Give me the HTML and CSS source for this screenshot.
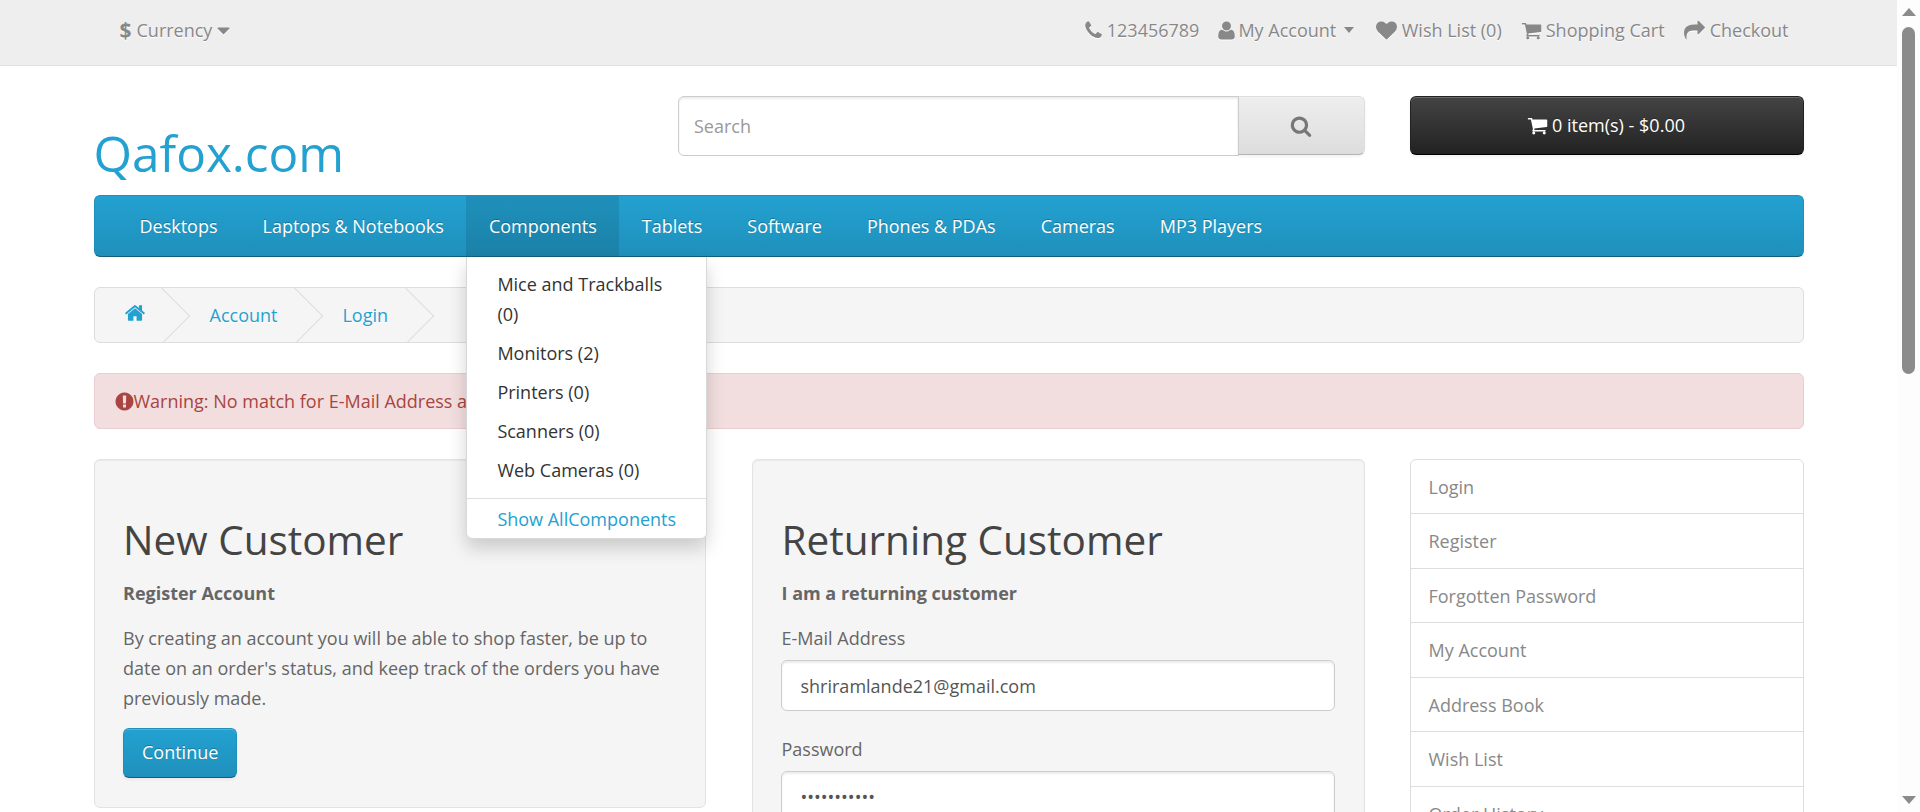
FILE: index.html
```html
<!DOCTYPE html>
<html lang="en">
<head>
<meta charset="utf-8">
<title>Account Login</title>
<link rel="stylesheet" href="styles.css">
</head>
<body>
<svg class="sprite" aria-hidden="true">
  <symbol id="i-home" viewBox="0 0 1792 1792"><path d="M1472 992v480q0 26-19 45t-45 19h-384v-384h-256v384h-384q-26 0-45-19t-19-45v-480q0-1 .5-3t.5-3l575-474 575 474q1 2 1 6zm223-69l-62 74q-8 9-21 11h-3q-13 0-21-7l-692-577-692 577q-12 8-24 7-13-2-21-11l-62-74q-8-10-7-23.500t11-21.500l719-599q32-26 76-26t76 26l244 204v-195q0-14 9-23t23-9h192q14 0 23 9t9 23v408l219 182q10 8 11 21.500t-7 23.500z"/></symbol>
  <symbol id="i-search" viewBox="0 0 1792 1792"><path d="M1216 832q0-185-131.500-316.500t-316.500-131.500-316.500 131.500-131.500 316.500 131.500 316.500 316.500 131.500 316.500-131.500 131.500-316.500zm512 832q0 52-38 90t-90 38q-54 0-90-38l-343-342q-179 124-399 124-143 0-273.500-55.500t-225-150-150-225-55.500-273.500 55.500-273.500 150-225 225-150 273.500-55.500 273.500 55.500 225 150 150 225 55.500 273.500q0 220-124 399l343 343q37 37 37 90z"/></symbol>
  <symbol id="i-cart" viewBox="0 0 1792 1792"><path d="M704 1536q0 52-38 90t-90 38-90-38-38-90 38-90 90-38 90 38 38 90zm896 0q0 52-38 90t-90 38-90-38-38-90 38-90 90-38 90 38 38 90zm128-1088v512q0 24-16.500 42.500t-40.500 21.500l-1044 122q13 60 13 70 0 16-24 64h920q26 0 45 19t19 45-19 45-45 19h-1024q-26 0-45-19t-19-45q0-11 8-31.500t16-36 21.500-40 15.500-29.500l-177-823h-204q-26 0-45-19t-19-45 19-45 45-19h256q16 0 28.500 6.500t19.500 15.500 13 24.500 8 26 5.500 29.500 4.500 26h1201q26 0 45 19t19 45z"/></symbol>
  <symbol id="i-heart" viewBox="0 0 1792 1792"><path d="M896 1664q-26 0-44-18l-624-602q-10-8-27.500-26t-55.500-65.500-68-97.500-53.500-121-23.500-138q0-220 127-344t351-124q62 0 126.500 21.500t120 58 95.500 68.500 76 68q36-36 76-68t95.500-68.500 120-58 126.500-21.500q224 0 351 124t127 344q0 221-229 450l-623 600q-18 18-44 18z"/></symbol>
  <symbol id="i-user" viewBox="0 0 1792 1792"><path d="M1600 1405q0 120-73 189.500t-194 69.500h-874q-121 0-194-69.500t-73-189.500q0-53 3.500-103.500t14-109 26.500-108.500 43-97.500 62-81 85.500-53.500 111.500-20q9 0 42 21.500t74.500 48 108 48 133.500 21.500 133.500-21.500 108-48 74.500-48 42-21.500q61 0 111.500 20t85.500 53.500 62 81 43 97.500 26.500 108.500 14 109 3.500 103.500zm-320-893q0 159-112.500 271.500t-271.500 112.500-271.500-112.500-112.500-271.500 112.500-271.500 271.500-112.500 271.500 112.500 112.500 271.500z"/></symbol>
  <symbol id="i-phone" viewBox="0 0 1792 1792"><path d="M1600 1240q0 27-10 70.500t-21 68.500q-21 50-122 106-94 51-186 51-27 0-53-3.500t-57.500-12.500-47-14.500-55.500-20.500-49-18q-98-35-175-83-127-79-264-216t-216-264q-48-77-83-175-3-9-18-49t-20.500-55.500-14.500-47-12.500-57.500-3.500-53q0-92 51-186 56-101 106-122 25-11 68.500-21t70.500-10q14 0 21 3 18 6 53 76 11 19 30 54t35 63.500 31 53.500q3 4 17.500 25t21.500 35.500 7 28.500q0 20-28.500 50t-62 55-62 53-28.500 46q0 9 5 22.500t8.500 20.500 14 24 11.500 19q76 137 174 235t235 174q2 1 19 11.500t24 14 20.500 8.500 22.500 5q18 0 46-28.500t53-62 55-62 50-28.500q14 0 28.500 7t35.500 21.500 25 17.500q25 15 53.500 31t63.500 35 54 30q70 35 76 53 3 7 3 21z"/></symbol>
  <symbol id="i-share" viewBox="0 0 1792 1792"><path d="M1792 640q0 26-19 45l-512 512q-19 19-45 19t-45-19-19-45v-256h-224q-98 0-175.500 6t-154 21.500-133 42.500-105.500 69.500-80 101-48.500 138.500-17.500 181q0 55 5 123 0 6 2.500 23.500t2.500 26.500q0 15-8.500 25t-23.500 10q-16 0-28-17-7-9-13-22t-13.500-30-10.500-24q-127-285-127-451 0-199 53-333 162-403 875-403h224v-256q0-26 19-45t45-19 45 19l512 512q19 19 19 45z"/></symbol>
  <symbol id="i-alert" viewBox="0 0 1792 1792"><path d="M896 128q209 0 385.500 103t279.500 279.500 103 385.500-103 385.500-279.500 279.500-385.500 103-385.500-103-279.500-279.500-103-385.500 103-385.500 279.500-279.500 385.500-103zm128 1247v-190q0-14-9-23.500t-22-9.500h-192q-13 0-23 10t-10 23v190q0 13 10 23t23 10h192q13 0 22-9.500t9-23.500zm-2-344l18-621q0-12-10-18-10-8-24-8h-220q-14 0-24 8-10 6-10 18l17 621q0 10 10 17.500t24 7.500h185q14 0 23.500-7.500t10.500-17.500z"/></symbol>
  <symbol id="i-caret" viewBox="0 0 1792 1792"><path d="M1408 704q0 26-19 45l-448 448q-19 19-45 19t-45-19l-448-448q-19-19-19-45t19-45 45-19h896q26 0 45 19t19 45z"/></symbol>
</svg>

<div class="viewport">
  <div class="page">
    <nav class="top">
      <div class="wrap top-inner">
        <div class="currency">
          <span class="dollar">$</span>
          <span>Currency</span>
          <svg class="icon icon-caret"><use href="#i-caret"/></svg>
        </div>
        <ul class="top-links">
          <li class="tl-phone"><svg class="icon"><use href="#i-phone"/></svg>123456789</li>
          <li class="tl-user"><svg class="icon"><use href="#i-user"/></svg>My Account<span class="mini-caret"></span></li>
          <li class="tl-heart"><svg class="icon"><use href="#i-heart"/></svg>Wish List (0)</li>
          <li class="tl-cart"><svg class="icon"><use href="#i-cart"/></svg>Shopping Cart</li>
          <li class="tl-share"><svg class="icon"><use href="#i-share"/></svg>Checkout</li>
        </ul>
      </div>
    </nav>

    <div class="wrap">
      <header class="head">
        <div class="logo"><a href="#">Qafox.com</a></div>
        <div class="search">
          <input class="search-input" type="text" placeholder="Search">
          <button class="search-btn" type="button"><svg class="icon-search"><use href="#i-search"/></svg></button>
        </div>
        <button class="cart" type="button"><svg class="icon-cart"><use href="#i-cart"/></svg>0 item(s) - $0.00</button>
      </header>

      <nav class="menu">
        <ul class="menu-list">
          <li><a href="#">Desktops</a></li>
          <li><a href="#">Laptops &amp; Notebooks</a></li>
          <li class="open">
            <a href="#">Components</a>
            <div class="dropdown">
              <ul class="dropdown-list">
                <li><a href="#">Mice and Trackballs (0)</a></li>
                <li><a href="#">Monitors (2)</a></li>
                <li><a href="#">Printers (0)</a></li>
                <li><a href="#">Scanners (0)</a></li>
                <li><a href="#">Web Cameras (0)</a></li>
              </ul>
              <a class="see-all" href="#">Show AllComponents</a>
            </div>
          </li>
          <li><a href="#">Tablets</a></li>
          <li><a href="#">Software</a></li>
          <li><a href="#">Phones &amp; PDAs</a></li>
          <li><a href="#">Cameras</a></li>
          <li><a href="#">MP3 Players</a></li>
        </ul>
      </nav>

      <ul class="breadcrumb">
        <li><a href="#"><svg class="icon-home"><use href="#i-home"/></svg></a></li>
        <li><a href="#">Account</a></li>
        <li><a href="#">Login</a></li>
      </ul>

      <div class="alert"><svg class="icon-alert"><use href="#i-alert"/></svg>Warning: No match for E-Mail Address and/or Password.</div>

      <div class="columns">
        <main class="content">
          <section class="well">
            <h2>New Customer</h2>
            <p><strong>Register Account</strong></p>
            <p>By creating an account you will be able to shop faster, be up to date on an order's status, and keep track of the orders you have previously made.</p>
            <a class="btn-primary" href="#">Continue</a>
          </section>
          <section class="well">
            <h2>Returning Customer</h2>
            <p><strong>I am a returning customer</strong></p>
            <div class="form-group">
              <label for="email">E-Mail Address</label>
              <input id="email" class="form-control" type="text" value="shriramlande21@gmail.com">
            </div>
            <div class="form-group">
              <label for="pass">Password</label>
              <input id="pass" class="form-control" type="password" value="12345678901">
            </div>
          </section>
        </main>
        <aside class="side-list">
          <a href="#">Login</a>
          <a href="#">Register</a>
          <a href="#">Forgotten Password</a>
          <a href="#">My Account</a>
          <a href="#">Address Book</a>
          <a href="#">Wish List</a>
          <a href="#">Order History</a>
        </aside>
      </div>
    </div>
  </div>

  <div class="scrollbar" aria-hidden="true">
    <span class="sb-up"></span>
    <div class="sb-track"><div class="sb-thumb"></div></div>
    <span class="sb-down"></span>
  </div>
</div>
</body>
</html>
```
FILE: styles.css
```css
* { box-sizing: border-box; }
html, body { margin: 0; padding: 0; height: 812px; overflow: hidden; }
body {
  font-family: "Open Sans", "Noto Sans", sans-serif;
  font-size: 18px;
  line-height: 30px;
  color: #666;
  background: #fff;
}
a { color: #23a1d1; text-decoration: none; }
ul { list-style: none; margin: 0; padding: 0; }
.sprite { display: none; }

.viewport { display: flex; width: 1920px; height: 812px; overflow: hidden; }
.page { width: 1897px; flex: none; height: 812px; overflow: hidden; }
.wrap { width: 1710px; margin: 0 auto; }

/* scrollbar */
.scrollbar { flex: 1; display: flex; flex-direction: column; align-items: center; background: #fdfdfd; }
.sb-up, .sb-down { flex: none; width: 0; height: 0; border-left: 7.5px solid transparent; border-right: 7.5px solid transparent; }
.sb-up { margin-top: 8px; border-bottom: 8px solid #8b8b8b; }
.sb-down { margin-bottom: 8px; border-top: 8px solid #8b8b8b; }
.sb-track { flex: 1; width: 100%; padding: 11px 5px 0; }
.sb-thumb { height: 347px; background: #8b8b8b; border-radius: 7px; }

/* top bar */
.top { height: 66px; background: #eee; border-bottom: 1px solid #e2e2e2; color: #888; text-shadow: 0 1px 0 #fff; }
.top-inner { display: flex; justify-content: space-between; align-items: center; height: 60px; padding: 0 15px 0 26px; }
.currency { display: flex; align-items: center; }
.dollar { font-size: 21px; font-weight: 700; margin-right: 5px; }
.icon { width: 21px; height: 21px; fill: #888; flex: none; filter: drop-shadow(0 1px 0 #fff); }
.icon-caret { margin-left: 1px; }
.top-links { display: flex; align-items: center; gap: 19px; }
.top-links li { display: flex; align-items: center; }
.tl-phone .icon { margin-right: 3px; }
.tl-user { margin-left: -2px; }
.tl-user .icon { margin-right: 1px; }
.tl-heart { margin-left: 2.5px; }
.tl-heart .icon { margin-right: 5px; }
.tl-cart .icon { margin-right: 4px; }
.tl-share .icon { margin-right: 5px; }
.mini-caret { width: 0; height: 0; margin-left: 8px; border-left: 5.5px solid transparent; border-right: 5.5px solid transparent; border-top: 6px solid #888; }

/* header */
.head { display: flex; align-items: flex-start; margin-top: 30px; height: 99px; }
.logo { width: 584.5px; flex: none; font-size: 49.5px; line-height: 54px; padding-top: 29.5px; }
.search { display: flex; width: 686.5px; height: 60px; flex: none; }
.search-input {
  flex: 1; min-width: 0; height: 60px; padding: 0 15px;
  font: 18px "Open Sans", sans-serif; color: #555; background: #fff;
  border: 1px solid #ccc; border-radius: 6px 0 0 6px; outline: none;
  box-shadow: inset 0 2px 2px rgba(0,0,0,.075);
}
.search-input::placeholder { color: #999; opacity: 1; }
.search-btn {
  width: 127px; height: 59px; margin-left: -1px; padding: 0;
  display: flex; align-items: center; justify-content: center;
  background: linear-gradient(to bottom, #eee, #ddd);
  border: 1px solid; border-color: #ddd #ddd #b3b3b3 #ccc; border-radius: 0 6px 6px 0;
  box-shadow: inset 0 1px 0 rgba(255,255,255,.2), 0 2px 3px rgba(0,0,0,.05);
}
.icon-search { width: 22px; height: 22px; fill: #777; }
.cart {
  width: 394px; height: 59px; margin-left: 45px; flex: none;
  display: flex; align-items: center; justify-content: center; padding: 0 1px 0 0;
  font: 18px/27px "Open Sans", sans-serif; color: #fff; text-shadow: 0 -1px 0 rgba(0,0,0,.25);
  background: linear-gradient(to bottom, #444, #222);
  border: 1px solid; border-color: #222 #222 #000; border-radius: 6px;
  box-shadow: inset 0 1px 0 rgba(255,255,255,.2), 0 2px 3px rgba(0,0,0,.05);
}
.icon-cart { width: 21px; height: 21px; fill: #fff; margin-right: 4px; }

/* menu */
.menu {
  height: 62px; padding: 0 22.5px; border: 1px solid; border-color: #1f90bb #1f90bb #145e7a;
  border-radius: 6px; background: linear-gradient(to bottom, #23a1d1, #1f90bb);
}
.menu-list { display: flex; height: 60px; }
.menu-list > li { position: relative; }
.menu-list > li > a { display: block; height: 60px; padding: 15px 22.5px; color: #fff; text-shadow: 0 -1px 0 rgba(0,0,0,.25); }
.open > a { background: rgba(0,0,0,.1); }
.dropdown {
  position: absolute; top: 61px; left: 0; z-index: 10; width: 241px; padding-top: 7px;
  background: #fff; border: 1px solid rgba(0,0,0,.15); border-top: 0; border-radius: 0 0 6px 6px;
  box-shadow: 0 9px 18px rgba(0,0,0,.175);
}
.dropdown-list a { display: block; padding: 4.5px 30px; color: #333; }
.see-all { display: block; margin-top: 9px; padding: 4.5px 30px; border-top: 1px solid #ddd; }

/* breadcrumb */
.breadcrumb {
  display: flex; gap: 5px; height: 56px; margin: 30px 0; padding: 12px 0;
  background: #f5f5f5; border: 1px solid #ddd; border-radius: 6px; overflow: hidden;
  text-shadow: 0 1px 0 #fff;
}
.breadcrumb li { position: relative; padding: 0 30px; white-space: nowrap; }
.breadcrumb li::after {
  content: ""; position: absolute; top: -4.5px; right: -7.5px; width: 39px; height: 39px;
  border-right: 1px solid #ddd; border-bottom: 1px solid #ddd; transform: rotate(-45deg);
}
.icon-home { display: block; width: 22px; height: 22px; fill: #23a1d1; margin: 2px -1px 0 -1px; }

/* alert */
.alert {
  display: flex; align-items: center; height: 56px; margin-bottom: 30px; padding: 0 21px;
  color: #a94442; background: #f2dede; border: 1px solid #ebccd1; border-radius: 6px;
}
.icon-alert { width: 21px; height: 21px; flex: none; fill: #a94442; margin: 0 -1px 0 -2px; }

/* columns */
.columns { display: flex; gap: 45px; align-items: flex-start; }
.content { display: flex; gap: 46px; width: 1271px; flex: none; align-items: flex-start; }
.well {
  width: 612.5px; flex: none; padding: 28.5px; background: #f5f5f5;
  border: 1px solid #e3e3e3; border-radius: 6px; box-shadow: inset 0 1px 1px rgba(0,0,0,.05);
}
.well h2 { margin: 29px 0 16px; font-size: 40.5px; line-height: 44.5px; font-weight: 400; color: #444; }
.well p { margin: 0 0 15px; }
.btn-primary {
  display: inline-block; height: 50px; padding: 10px 18px; color: #fff; line-height: 27px;
  text-shadow: 0 -1px 0 rgba(0,0,0,.25);
  background: linear-gradient(to bottom, #23a1d1, #1f90bb);
  border: 1px solid; border-color: #1f90bb #1f90bb #145e7a; border-radius: 6px;
  box-shadow: inset 0 1px 0 rgba(255,255,255,.2), 0 2px 3px rgba(0,0,0,.05);
}
.form-group { margin-bottom: 23px; }
.form-group label { display: block; margin-bottom: 7px; }
.form-control {
  display: block; width: calc(100% + 1px); height: 51px; margin-left: -1px; padding: 0 18px 0 19px;
  font: 18px "Open Sans", sans-serif; color: #555; background: #fff;
  border: 1px solid #ccc; border-radius: 6px; outline: none;
  box-shadow: inset 0 2px 2px rgba(0,0,0,.075);
}
.side-list { flex: 1; min-width: 0; }
.side-list a {
  display: block; height: 55.45px; margin-top: -1px; padding: 12px 18px; color: #888;
  border: 1px solid #ddd; background: #fff;
}
.side-list a:first-child { margin-top: 0; border-radius: 6px 6px 0 0; }
```
